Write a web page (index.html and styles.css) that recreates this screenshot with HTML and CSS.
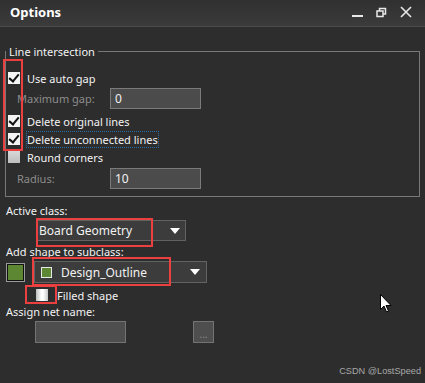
FILE: index.html
```html
<!DOCTYPE html>
<html lang="en">
<head>
    <meta charset="UTF-8" />
    <title>Options</title>
    <link rel="stylesheet" href="styles.css">
</head>
<body>
    <div class="window">
        <div class="titlebar">
            <span class="title">Options</span>
            <div class="controls">
                <svg width="11" height="11" viewBox="0 0 11 11"><rect x="0" y="8" width="11" height="2" fill="#e8e8e8"/></svg>
                <svg width="11" height="11" viewBox="0 0 11 11" fill="none" stroke="#e8e8e8" stroke-width="1.5"><rect x="1" y="4" width="6" height="5.5"/><path d="M3.5 4V1.5h6V7H7"/></svg>
                <svg width="12" height="12" viewBox="0 0 12 12" stroke="#e8e8e8" stroke-width="1.6"><path d="M1 1l10 10M11 1L1 11"/></svg>
            </div>
        </div>

        <div class="content">
            <fieldset class="group">
                <legend>Line intersection</legend>
                <div class="check-row first"><span class="box checked"></span>Use auto gap</div>
                <div class="field-row"><span class="dim">Maximum gap:</span><span class="input">0</span></div>
                <div class="check-row gap"><span class="box checked"></span>Delete original lines</div>
                <div class="check-row"><span class="box checked"></span><span class="focus">Delete unconnected lines</span></div>
                <div class="check-row"><span class="box off"></span>Round corners</div>
                <div class="field-row"><span class="dim">Radius:</span><span class="input">10</span></div>
            </fieldset>

            <div class="label class-label">Active class:</div>
            <div class="select class-select">
                <span class="value">Board Geometry</span>
                <span class="arrow"></span>
            </div>

            <div class="label sub-label">Add shape to subclass:</div>
            <div class="sub-row">
                <span class="swatch"></span>
                <div class="select sub-select">
                    <span class="value"><span class="mini-swatch"></span>Design_Outline</span>
                    <span class="arrow"></span>
                </div>
            </div>
            <div class="filled-row"><span class="box soft"></span>Filled shape</div>

            <div class="label">Assign net name:</div>
            <div class="net-row">
                <span class="input net"></span>
                <span class="dots">...</span>
            </div>
        </div>

        <div class="mark mark-checks"></div>
        <div class="mark mark-class"></div>
        <div class="mark mark-sub"></div>
        <div class="mark mark-filled"></div>

        <svg class="cursor" width="12" height="19" viewBox="0 0 12 19">
            <path d="M0.5 0.5v15l3.5-3.5 2.5 6 2-1-2.5-5.5h5z" fill="#fff" stroke="#000" stroke-width="1"/>
        </svg>

        <div class="watermark">CSDN @LostSpeed</div>
    </div>
</body>
</html>
```

FILE: styles.css
```css
body {
    margin: 0;
    background: #2d2d2d;
    font-family: "Noto Sans", "Open Sans", sans-serif;
    font-size: 11px;
    color: #f2f2f2;
}

.window {
    position: relative;
    width: 425px;
    height: 383px;
    overflow: hidden;
    background: #2d2d2d;
}

.titlebar {
    height: 26px;
    display: flex;
    align-items: center;
    justify-content: space-between;
    padding: 0 13px 0 10px;
    background: linear-gradient(#303030, #3b3b3b);
    border-bottom: 1px solid #4a4a4a;
}

.title {
    font-weight: bold;
    font-size: 13px;
    color: #fff;
    margin-top: -2px;
}

.controls {
    display: flex;
    gap: 13px;
    align-items: center;
    margin-top: -2px;
}

.content {
    padding: 18px 0 0 6px;
}

/* group box */
.group {
    margin: 0 5px 0 -1px;
    padding: 0 0 6px 0;
    border: 1px solid #787878;
}

.group legend {
    padding: 0 3px;
    margin-left: 0;
    line-height: 13px;
    color: #f2f2f2;
}

.check-row {
    display: flex;
    align-items: center;
    height: 18px;
    padding-left: 2px;
}

.check-row.first {
    height: 16px;
    margin-top: 12px;
}

.check-row.gap {
    margin-top: 2px;
}

.box {
    width: 12px;
    height: 12px;
    margin-right: 7px;
    box-sizing: border-box;
    background: #f4f4f4;
    position: relative;
}

.box.checked::after {
    content: "";
    position: absolute;
    left: 3px;
    top: 0;
    width: 4px;
    height: 8px;
    border: solid #111;
    border-width: 0 2px 2px 0;
    transform: rotate(40deg);
}

.box.off {
    background: linear-gradient(#d8d8d8, #bdbdbd);
}

.box.soft {
    background: linear-gradient(90deg, #bdbdbd, #ffffff 45%, #ffffff 60%, #c8c8c8);
}

.focus {
    outline: 1px dotted #2c6aa6;
    outline-offset: 0;
}

.field-row {
    display: flex;
    align-items: center;
    height: 24px;
}

.dim {
    color: #8c8c8c;
    width: 93px;
    padding-left: 11px;
}

.input {
    box-sizing: border-box;
    width: 91px;
    height: 21px;
    background: #4b4b4b;
    border: 1px solid #7a7a7a;
    padding: 1px 4px;
    color: #f2f2f2;
    font-size: 12px;
}

.label {
    line-height: 16px;
}

.class-label {
    margin-top: 6px;
}

.sub-label {
    margin-top: 3px;
}

/* dropdowns */
.select {
    box-sizing: border-box;
    height: 21px;
    display: flex;
    align-items: center;
    justify-content: space-between;
    background: #3c3c3c;
    border: 1px solid #626262;
    padding: 0 5px 0 2px;
    font-size: 12px;
}

.class-select {
    width: 150px;
    margin: 1px 0 0 30px;
}

.arrow {
    width: 0;
    height: 0;
    border-left: 5px solid transparent;
    border-right: 5px solid transparent;
    border-top: 6px solid #fff;
}

.sub-row {
    display: flex;
    align-items: center;
    gap: 9px;
    margin-top: 1px;
}

.swatch {
    width: 19px;
    height: 19px;
    box-sizing: border-box;
    background: #5e8734;
    border: 1px solid #9a9a9a;
    box-shadow: inset 0 0 0 1px #111;
}

.sub-select {
    width: 173px;
    height: 22px;
    padding-left: 6px;
    padding-right: 6px;
}

.sub-select .value {
    display: flex;
    align-items: center;
}

.mini-swatch {
    width: 11px;
    height: 11px;
    box-sizing: border-box;
    background: #5e8734;
    border: 1px solid #e8e8e8;
    margin-right: 9px;
}

.filled-row {
    display: flex;
    align-items: center;
    height: 18px;
    padding-left: 30px;
    margin-top: 3px;
}

.filled-row .box {
    margin-right: 9px;
}

.net-row {
    display: flex;
    align-items: center;
    gap: 67px;
    padding-left: 29px;
    margin-top: 1px;
}

.input.net {
    width: 91px;
    height: 22px;
    background: #4e4e4e;
    border-color: #737373;
}

.dots {
    box-sizing: border-box;
    width: 21px;
    height: 22px;
    background: #4e4e4e;
    border: 1px solid #737373;
    color: #8a8a8a;
    font-size: 10px;
    text-align: center;
    line-height: 24px;
}

/* red annotation boxes */
.mark {
    position: absolute;
    border: 2px solid #ec4040;
    box-sizing: border-box;
}

.mark-checks { left: 3px; top: 59px; width: 20px; height: 92px; }
.mark-class { left: 36px; top: 218px; width: 117px; height: 29px; }
.mark-sub { left: 32px; top: 257px; width: 139px; height: 29px; }
.mark-filled { left: 25px; top: 285px; width: 32px; height: 19px; }

.cursor {
    position: absolute;
    left: 380px;
    top: 294px;
}

.watermark {
    position: absolute;
    right: 4px;
    bottom: 7px;
    font-family: "Liberation Sans", sans-serif;
    font-size: 9.2px;
    color: #a8a8a8;
}
```
